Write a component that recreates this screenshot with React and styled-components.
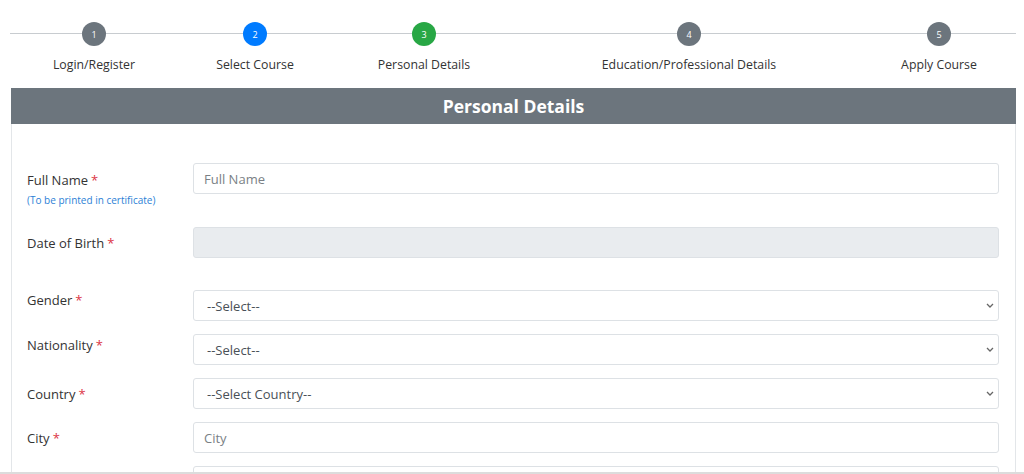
import styled, { createGlobalStyle } from "styled-components";

const GlobalStyle = createGlobalStyle`
  * { box-sizing: border-box; }
  body {
    margin: 0;
    background: #fff;
    font-family: "Open Sans", "Noto Sans", Arial, sans-serif;
    color: #212529;
    overflow: hidden;
  }
`;

const Page = styled.div`
  padding: 0 8px 0 10px;
  height: 474px;
  overflow: hidden;
  border-bottom: 2px solid #dcdcdc;
`;

const Stepper = styled.div`
  position: relative;
  display: grid;
  grid-template-columns: 168px 154px 184px 346px 154px;
  padding-top: 22px;
  height: 88px;
  &::before {
    content: "";
    position: absolute;
    left: 0;
    right: 0;
    top: 33px;
    height: 1px;
    background: #c8ccd0;
  }
`;

const Step = styled.div`
  display: flex;
  flex-direction: column;
  align-items: center;
  position: relative;
`;

const Dot = styled.div`
  width: 24px;
  height: 24px;
  border-radius: 50%;
  background: ${(p) => p.$color};
  color: #fff;
  font-size: 9px;
  display: flex;
  align-items: center;
  justify-content: center;
`;

const StepLabel = styled.div`
  margin-top: 10px;
  font-size: 12.3px;
  color: #333;
  white-space: nowrap;
`;

const Card = styled.div`
  margin-left: 1px;
  border: 1px solid #e3e6e9;
  border-top: none;
  min-height: 400px;
`;

const CardHeader = styled.div`
  height: 36px;
  background: #6c757d;
  color: #fff;
  font-size: 17.5px;
  font-weight: 700;
  display: flex;
  align-items: center;
  justify-content: center;
  margin: 0 -1px;
`;

const CardBody = styled.div`
  padding: 39px 16px 0 15px;
`;

const Row = styled.div`
  display: grid;
  grid-template-columns: 166px 1fr;
  align-items: start;
  height: 31px;
  margin-bottom: ${(p) => p.$gap}px;
`;

const LabelBox = styled.div`
  padding-top: ${(p) => p.$pt || 0}px;
`;

const Label = styled.div`
  font-size: 13px;
  line-height: 18px;
  color: #333;
`;

const Req = styled.span`
  color: #dc3545;
  margin-left: 3px;
`;

const Hint = styled.div`
  font-size: 10px;
  color: #2d7fd6;
  margin-top: 4px;
`;

const Input = styled.input`
  width: 100%;
  height: 31px;
  border: 1px solid #dde1e5;
  border-radius: 3px;
  padding: 0 10px;
  font-family: inherit;
  font-size: 13px;
  color: #495057;
  background: ${(p) => (p.disabled ? "#e9ecef" : "#fff")};
  outline: none;
  &::placeholder { color: #7a7f85; }
`;

const SelectWrap = styled.div`
  position: relative;
  height: 31px;
`;

const Select = styled.select`
  width: 100%;
  height: 31px;
  border: 1px solid #dde1e5;
  border-radius: 3px;
  padding: 0 13px;
  font-family: inherit;
  font-size: 13px;
  color: #495057;
  background: #fff;
  appearance: none;
  outline: none;
`;

const Chevron = styled.svg`
  position: absolute;
  right: 5px;
  top: 13px;
  pointer-events: none;
`;

const steps = [
  { n: 1, label: "Login/Register", color: "#6c757d" },
  { n: 2, label: "Select Course", color: "#007bff" },
  { n: 3, label: "Personal Details", color: "#28a745" },
  { n: 4, label: "Education/Professional Details", color: "#6c757d" },
  { n: 5, label: "Apply Course", color: "#6c757d" },
];

const Dropdown = ({ text }) => (
  <SelectWrap>
    <Select defaultValue="">
      <option value="">{text}</option>
    </Select>
    <Chevron width="8" height="5" viewBox="0 0 8 5">
      <path d="M1 1l3 3 3-3" fill="none" stroke="#666" strokeWidth="1.3" />
    </Chevron>
  </SelectWrap>
);

export default function App() {
  return (
    <>
      <GlobalStyle />
      <Page>
        <Stepper>
          {steps.map((s) => (
            <Step key={s.n}>
              <Dot $color={s.color}>{s.n}</Dot>
              <StepLabel>{s.label}</StepLabel>
            </Step>
          ))}
        </Stepper>
        <Card>
          <CardHeader>Personal Details</CardHeader>
          <CardBody>
            <Row $gap={33}>
              <LabelBox $pt={8}>
                <Label>
                  Full Name<Req>*</Req>
                </Label>
                <Hint>(To be printed in certificate)</Hint>
              </LabelBox>
              <Input placeholder="Full Name" />
            </Row>
            <Row $gap={32}>
              <LabelBox $pt={7}>
                <Label>
                  Date of Birth<Req>*</Req>
                </Label>
              </LabelBox>
              <Input disabled />
            </Row>
            <Row $gap={13}>
              <LabelBox $pt={1}>
                <Label>
                  Gender<Req>*</Req>
                </Label>
              </LabelBox>
              <Dropdown text="--Select--" />
            </Row>
            <Row $gap={13}>
              <LabelBox $pt={2}>
                <Label>
                  Nationality<Req>*</Req>
                </Label>
              </LabelBox>
              <Dropdown text="--Select--" />
            </Row>
            <Row $gap={13}>
              <LabelBox $pt={7}>
                <Label>
                  Country<Req>*</Req>
                </Label>
              </LabelBox>
              <Dropdown text="--Select Country--" />
            </Row>
            <Row $gap={13}>
              <LabelBox $pt={7}>
                <Label>
                  City<Req>*</Req>
                </Label>
              </LabelBox>
              <Input placeholder="City" />
            </Row>
            <Row $gap={13}>
              <div />
              <Input />
            </Row>
          </CardBody>
        </Card>
      </Page>
    </>
  );
}
